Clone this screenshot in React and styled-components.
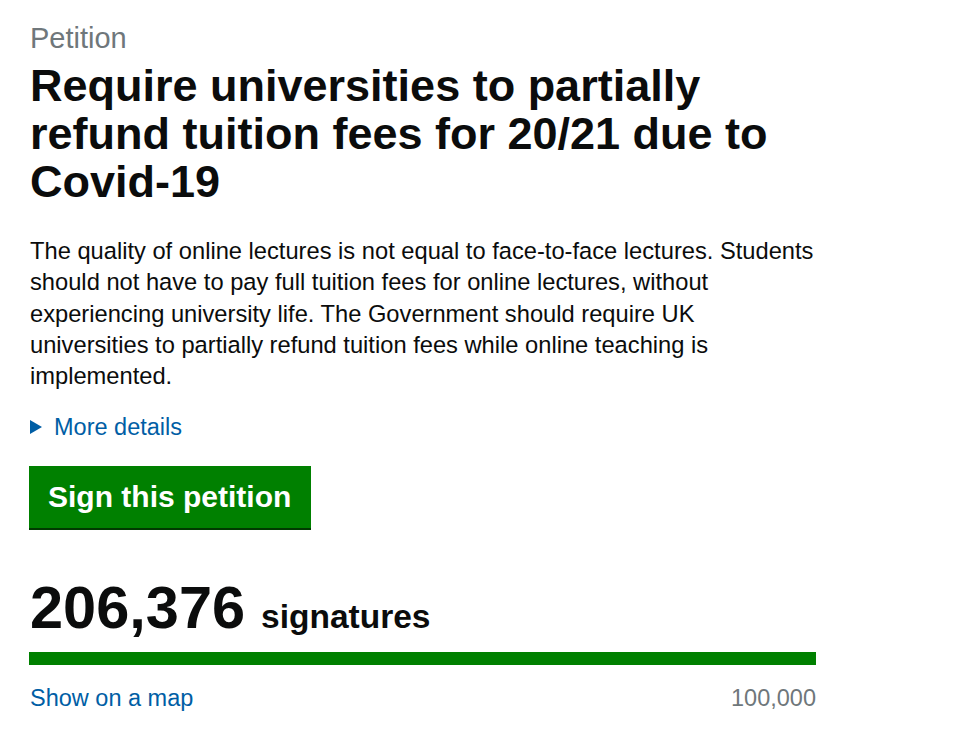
import React from 'react';
import styled, { createGlobalStyle } from 'styled-components';

const GlobalStyle = createGlobalStyle`
  body {
    margin: 0;
    background: #fff;
    font-family: "Liberation Sans", Arial, sans-serif;
    color: #0b0c0c;
  }
`;

const Page = styled.main`
  width: 787px;
  padding: 20px 0 0 29px;
`;

const Caption = styled.div`
  padding-left: 1px;
  font-size: 29px;
  line-height: 36px;
  color: #6f777b;
`;

const Title = styled.h1`
  margin: 6px 0 0;
  padding-left: 1px;
  font-size: 45px;
  line-height: 48px;
  font-weight: 700;
`;

const Body = styled.p`
  margin: 30px 0 0;
  padding-left: 1px;
  font-size: 23.7px;
  line-height: 31.25px;
  white-space: nowrap;
`;

const Details = styled.div`
  display: flex;
  align-items: center;
  gap: 12px;
  margin-top: 20px;
  padding-left: 1px;
  color: #005ea5;
  font-size: 23.5px;
  line-height: 30px;
`;

const Triangle = styled.span`
  width: 0;
  height: 0;
  border-top: 7px solid transparent;
  border-bottom: 7px solid transparent;
  border-left: 12px solid #005ea5;
`;

const Button = styled.button`
  display: block;
  margin-top: 24px;
  padding: 13px 20px 13px 19px;
  border: 0;
  background: #008000;
  box-shadow: 0 2px 0 #003a00;
  color: #fff;
  font-family: inherit;
  font-size: 30px;
  line-height: 36px;
  font-weight: 700;
  cursor: pointer;
`;

const Count = styled.div`
  display: flex;
  align-items: baseline;
  gap: 16px;
  margin-top: 48px;
  padding-left: 1px;
`;

const Number = styled.span`
  font-size: 59.5px;
  line-height: 64px;
  font-weight: 700;
`;

const Unit = styled.span`
  font-size: 33.5px;
  font-weight: 700;
`;

const Track = styled.div`
  height: 13px;
  margin-top: 12px;
  background: #dee0e2;
`;

const Fill = styled.div`
  height: 100%;
  background: #008000;
`;

const Footer = styled.div`
  display: flex;
  justify-content: space-between;
  margin-top: 18px;
  padding-left: 1px;
  font-size: 23.5px;
  line-height: 30px;
`;

const MapLink = styled.a`
  color: #005ea5;
  text-decoration: none;
`;

const Target = styled.span`
  color: #6f777b;
`;

const bodyLines = [
  'The quality of online lectures is not equal to face-to-face lectures. Students',
  'should not have to pay full tuition fees for online lectures, without',
  'experiencing university life. The Government should require UK',
  'universities to partially refund tuition fees while online teaching is',
  'implemented.',
];

export default function App() {
  const count = 206376;
  const target = 100000;
  const pct = Math.min(100, (count / target) * 100);

  return (
    <>
      <GlobalStyle />
      <Page>
        <Caption>Petition</Caption>
        <Title>Require universities to partially refund tuition fees for 20/21 due to Covid-19</Title>
        <Body>
          {bodyLines.map((line, i) => (
            <React.Fragment key={i}>
              {line}
              {i < bodyLines.length - 1 && <br />}
            </React.Fragment>
          ))}
        </Body>
        <Details>
          <Triangle />
          More details
        </Details>
        <Button>Sign this petition</Button>
        <Count>
          <Number>206,376</Number>
          <Unit>signatures</Unit>
        </Count>
        <Track>
          <Fill style={{ width: `${pct}%` }} />
        </Track>
        <Footer>
          <MapLink href="#">Show on a map</MapLink>
          <Target>100,000</Target>
        </Footer>
      </Page>
    </>
  );
}
